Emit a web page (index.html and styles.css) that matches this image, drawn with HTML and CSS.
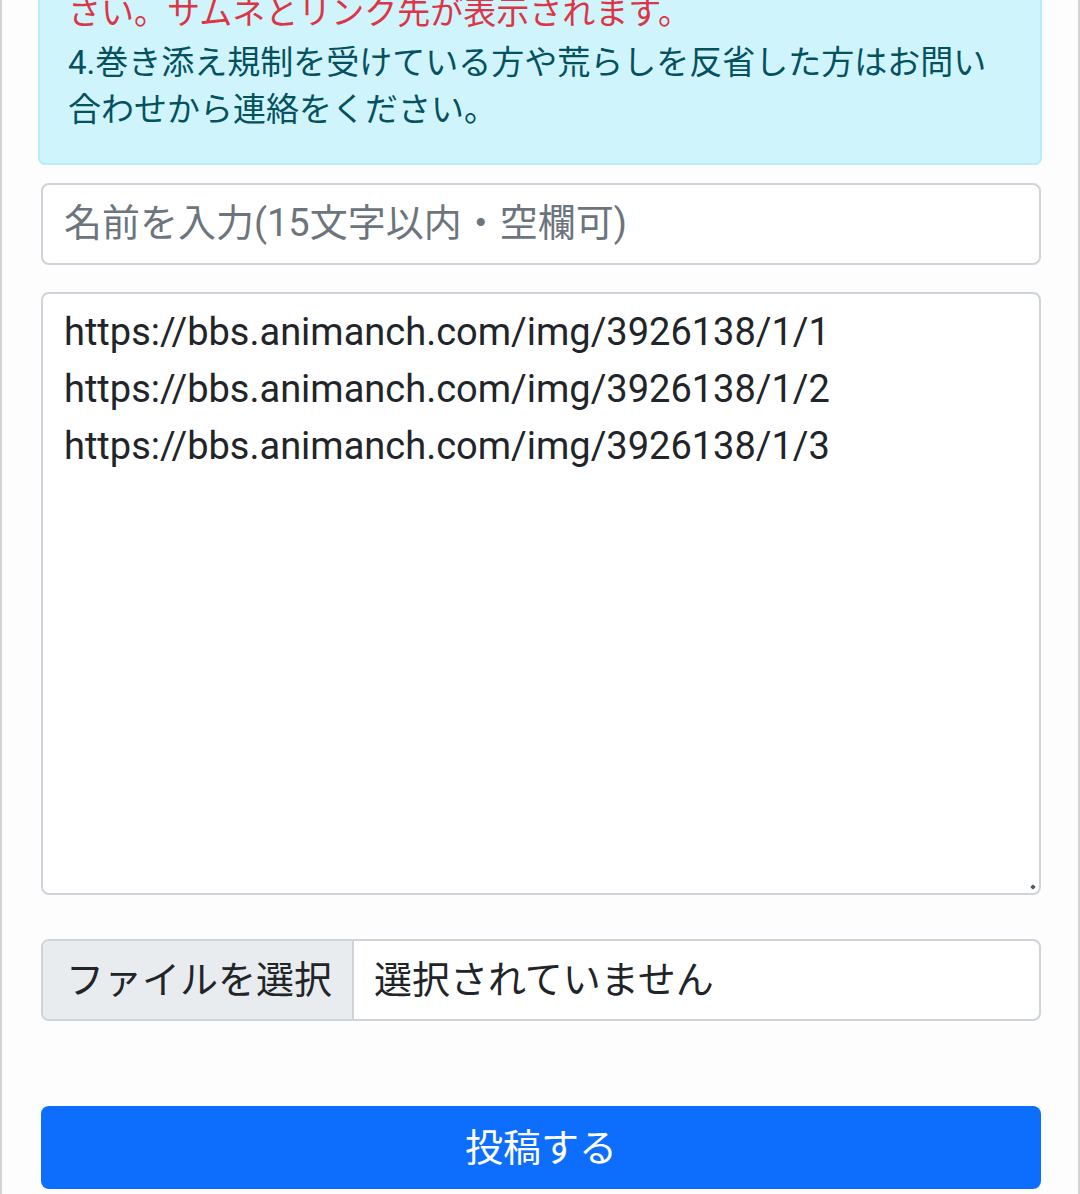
FILE: index.html
```html
<!DOCTYPE html>
<html lang="ja">
<head>
<meta charset="utf-8">
<title>投稿フォーム</title>
<link rel="stylesheet" href="styles.css">
</head>
<body>
<div class="page">
  <form class="post-form">
    <div class="alert">
      <p class="alert-line alert-red">さい。サムネとリンク先が表示されます。</p>
      <p class="alert-line">4.巻き添え規制を受けている方や荒らしを反省した方はお問い合わせから連絡をください。</p>
    </div>
    <input class="field name-field" type="text" placeholder="名前を入力(15文字以内・空欄可)">
    <div class="textarea-wrap">
      <textarea class="field body-field">https://bbs.animanch.com/img/3926138/1/1
https://bbs.animanch.com/img/3926138/1/2
https://bbs.animanch.com/img/3926138/1/3</textarea>
    </div>
    <div class="file-field">
      <span class="file-button">ファイルを選択</span>
      <span class="file-name">選択されていません</span>
    </div>
    <button class="submit" type="button">投稿する</button>
  </form>
</div>
</body>
</html>
```
FILE: styles.css
```css
html, body {
  margin: 0;
  padding: 0;
  background: #fdfdfd;
}

.page {
  width: 1080px;
  min-height: 1194px;
  box-sizing: border-box;
  border-left: 2px solid #d2d2d2;
  border-right: 2px solid #d2d2d2;
  padding: 0 37px 0 39px;
  background: #fdfdfd;
  font-family: Roboto, "Noto Sans CJK JP", sans-serif;
  color: #212529;
  overflow: hidden;
}

.post-form {
  display: flex;
  flex-direction: column;
}

.alert {
  margin: -38px -1px 0 -3px;
  padding: 28px 28px 30px 28px;
  background: #cff4fc;
  border: 2px solid #b6effb;
  border-radius: 7px;
  color: #055160;
  font-size: 33px;
  line-height: 47px;
}

.alert-line {
  margin: 0;
}

.alert-red {
  color: #dc3545;
  position: relative;
  top: -3px;
}

.field {
  display: block;
  width: 100%;
  box-sizing: border-box;
  border: 2px solid #ced4da;
  border-radius: 8px;
  background: #ffffff;
  font-family: Roboto, "Noto Sans CJK JP", sans-serif;
  font-size: 38px;
  color: #212529;
  outline: none;
}

.name-field {
  margin-top: 18px;
  height: 82px;
  padding: 0 21px 3px;
}

.name-field::placeholder {
  color: #6c757d;
  opacity: 1;
}

.textarea-wrap {
  position: relative;
  margin-top: 27px;
}

.body-field {
  height: 603px;
  padding: 10px 21px;
  line-height: 57px;
  resize: none;
}

.textarea-wrap::after {
  content: "";
  position: absolute;
  right: 6px;
  bottom: 6px;
  width: 4px;
  height: 4px;
  border-radius: 1px;
  background: #555b60;
  transform: rotate(45deg);
}

.file-field {
  margin-top: 44px;
  height: 82px;
  box-sizing: border-box;
  display: flex;
  border: 2px solid #ced4da;
  border-radius: 8px;
  background: #ffffff;
  overflow: hidden;
  font-size: 38px;
}

.file-button {
  display: flex;
  align-items: center;
  width: 311px;
  box-sizing: border-box;
  padding: 0 0 8px 23px;
  background: #e9ecef;
  border-right: 2px solid #ced4da;
  color: #212529;
}

.file-name {
  display: flex;
  align-items: center;
  padding: 0 0 8px 20px;
  color: #212529;
}

.submit {
  margin-top: 85px;
  height: 83px;
  width: 100%;
  padding: 0 0 7px;
  border: none;
  border-radius: 8px;
  background: #0d6efd;
  color: #ffffff;
  font-family: Roboto, "Noto Sans CJK JP", sans-serif;
  font-size: 38px;
  cursor: pointer;
}
```
